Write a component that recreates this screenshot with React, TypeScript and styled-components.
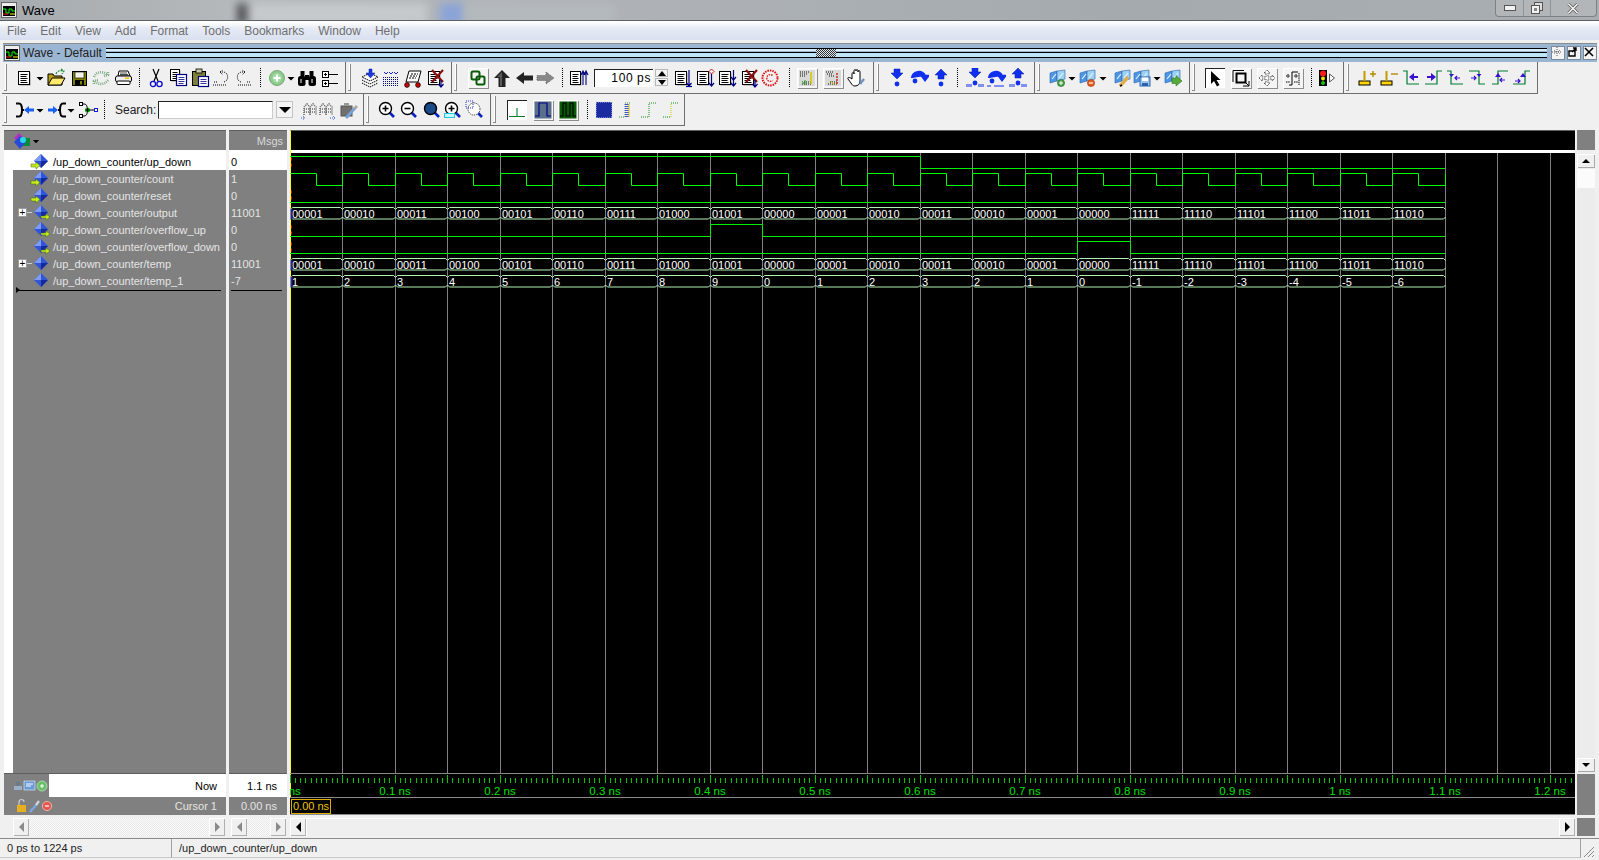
import React from "react";
import styled, { createGlobalStyle } from "styled-components";

const GlobalStyle = createGlobalStyle`
  html, body { margin: 0; padding: 0; background: #f0f0f0; overflow: hidden; }
  body { font-family: "Liberation Sans", Arial, sans-serif; font-size: 12px; color: #000; }
  #root { width: 1599px; height: 860px; }
`;

/* ---------- page frame ---------- */
const Page = styled.div`
  width: 1599px;
  height: 860px;
  display: flex;
  flex-direction: column;
  overflow: hidden;
  background: #f0f0f0;
`;
const TitleBar = styled.div`
  position: relative;
  height: 21px;
  flex: none;
  display: flex;
  align-items: center;
  overflow: hidden;
  background: linear-gradient(90deg, #a6abaf 0%, #b4b8bb 14%, #aeb2b6 40%, #a4aaae 70%, #a9aeb2 100%);
  border-bottom: 1px solid #5c6064;
  box-sizing: border-box;
`;
const Blur = styled.div<{ $l: number; $w: number; $c: string }>`
  position: absolute;
  top: 3px;
  left: ${(p) => p.$l}px;
  width: ${(p) => p.$w}px;
  height: 22px;
  background: ${(p) => p.$c};
  filter: blur(4px);
`;
const AppName = styled.span`
  position: relative;
  font-size: 13px;
  margin-left: 5px;
`;
const LogoBox = styled.span`
  position: relative;
  display: flex;
  margin-left: 1px;
`;
const WinControls = styled.div`
  position: absolute;
  right: 2px;
  top: 0;
  height: 17px;
  width: 102px;
  display: flex;
  border: 1px solid #7d8185;
  border-top: none;
  border-radius: 0 0 4px 4px;
  background: #b3b6b8;
  box-sizing: border-box;
`;
const WinBtn = styled.div<{ $w: number }>`
  width: ${(p) => p.$w}px;
  display: flex;
  align-items: center;
  justify-content: center;
  border-right: 1px solid #8f9397;
  &:last-child { border-right: none; }
`;
const MenuBar = styled.div`
  height: 19px;
  flex: none;
  display: flex;
  align-items: center;
  padding-left: 0;
  border-top: 1px solid #fff;
  background: linear-gradient(#ffffff 0%, #e6ebf5 35%, #d9e0f0 100%);
  box-sizing: border-box;
`;
const MenuItem = styled.span`
  color: #6f6f6f;
  padding: 0 7px;
  font-size: 12px;
`;
const SubTitle = styled.div`
  margin: 3px 2px 0 3px;
  height: 19px;
  flex: none;
  display: flex;
  align-items: center;
  background: #9ab6d2;
  border-top: 1px solid #8b8b8b;
  box-sizing: border-box;
`;
const SubText = styled.span`
  margin: 0 4px 0 3px;
  color: #222;
  white-space: nowrap;
`;
const GripLines = styled.div`
  flex: 1;
  height: 8px;
  display: flex;
  justify-content: center;
  align-items: center;
  border-top: 1px solid #000;
  border-bottom: 1px solid #000;
  background: linear-gradient(#d6ecfa 0 2px, #9ab6d2 2px 3px, #000 3px 4px, #bfe3f7 4px 6px);
`;
const GripDots = styled.span`
  width: 20px;
  height: 8px;
  background: repeating-conic-gradient(#333 0 25%, #dce6ef 0 50%) 0 0 / 2px 2px;
`;
const SubBtn = styled.span<{ $first?: boolean }>`
  width: 12px;
  height: 12px;
  margin-left: 2px;
  display: flex;
  background: #f4f4f4;
  border: 1px solid #7a8a9a;
  ${(p) => (p.$first ? "margin-left: 4px;" : "")}
`;

/* ---------- toolbars ---------- */
const ToolRow = styled.div<{ $h: number }>`
  height: ${(p) => p.$h}px;
  flex: none;
  display: flex;
  padding-left: 2px;
`;
const Group = styled.div<{ $w: number }>`
  width: ${(p) => p.$w}px;
  flex: none;
  box-sizing: border-box;
  display: flex;
  align-items: center;
  border-right: 1px solid #6e6e6e;
  border-bottom: 1px solid #6e6e6e;
`;
const Grip = styled.span`
  flex: none;
  width: 3px;
  height: 27px;
  margin: 0 1px 0 2px;
  box-sizing: border-box;
  border-right: 1px solid #8a8a8a;
  border-bottom: 1px solid #8a8a8a;
  box-shadow: inset -1px 0 0 #fff;
`;
const Strip = styled.div<{ $pad: number }>`
  display: flex;
  align-items: center;
  margin-left: ${(p) => p.$pad}px;
`;
const Tool = styled.div<{ $w: number }>`
  width: ${(p) => p.$w}px;
  flex: none;
  display: flex;
  justify-content: flex-start;
`;
const Face = styled.span<{ $kind?: string }>`
  display: flex;
  width: 20px;
  height: 20px;
  ${(p) =>
    p.$kind === "r"
      ? "box-shadow: inset 1px 1px 0 #fff, 1px 1px 0 #8c8c8c; background: #f4f4f4;"
      : ""}
  ${(p) =>
    p.$kind === "s"
      ? "box-shadow: inset 1px 1px 0 #222; background: #fff;"
      : ""}
`;
const SpinBox = styled.div`
  display: flex;
  align-items: center;
  margin-left: 25px;
  margin-right: 6px;
`;
const SpinInput = styled.div`
  width: 59px;
  height: 18px;
  box-sizing: border-box;
  background: #fff;
  border-top: 1px solid #222;
  border-left: 1px solid #222;
  font-size: 12px;
  line-height: 17px;
  text-align: right;
  padding-right: 2px;
  letter-spacing: 0.6px;
`;
const SpinButtons = styled.div`
  margin-left: 2px;
  width: 13px;
  display: flex;
  flex-direction: column;
  gap: 1px;
`;
const SpinBtn = styled.span<{ $down?: boolean }>`
  height: 8px;
  background: #f4f4f4;
  box-shadow: inset 0 0 0 1px #b8b8b8;
  display: flex;
  align-items: center;
  justify-content: center;
  &::after {
    content: "";
    border-left: 4px solid transparent;
    border-right: 4px solid transparent;
    ${(p) => (p.$down ? "border-top: 5px solid #000;" : "border-bottom: 5px solid #000;")}
  }
`;
const SearchBox = styled.div`
  display: flex;
  align-items: center;
  margin-right: 7px;
`;
const SearchLabel = styled.span`
  width: 43px;
  font-size: 12px;
  color: #222;
`;
const SearchInput = styled.div`
  width: 115px;
  height: 18px;
  box-sizing: border-box;
  background: #fff;
  border: 1px solid #222;
  border-right-color: #ccc;
  border-bottom-color: #ccc;
`;
const SearchDrop = styled.span`
  margin-left: 3px;
  width: 17px;
  height: 17px;
  background: #f4f4f4;
  box-shadow: inset 0 0 0 1px #c4c4c4;
  display: flex;
  align-items: center;
  justify-content: center;
  &::after {
    content: "";
    border-left: 6px solid transparent;
    border-right: 6px solid transparent;
    border-top: 6px solid #000;
  }
`;

/* ---------- wave panes ---------- */
const Panes = styled.div`
  margin-top: 4px;
  height: 706px;
  flex: none;
  display: flex;
  padding-left: 4px;
`;
const Col = styled.div<{ $w: number; $gap?: number }>`
  width: ${(p) => p.$w}px;
  margin-right: ${(p) => p.$gap ?? 3}px;
  flex: none;
  display: flex;
  flex-direction: column;
`;
const Head = styled.div<{ $dark?: boolean }>`
  height: 20px;
  flex: none;
  box-sizing: border-box;
  display: flex;
  align-items: center;
  border-top: 1px solid #5e5e5e;
  background: ${(p) => (p.$dark ? "#000" : "#808080")};
  ${(p) => (p.$dark ? "border-left: 1px solid #ff0;" : "")}
`;
const HeadIcon = styled.span`
  display: flex;
  margin-left: 9px;
`;
const HeadDrop = styled.span`
  display: flex;
  margin-left: -4px;
`;
const MsgsLabel = styled.span`
  margin-left: auto;
  margin-right: 4px;
  color: #d8d8d8;
  font-size: 11px;
`;
const HeadGap = styled.div<{ $mark?: boolean }>`
  height: 3px;
  flex: none;
  background: #fff;
  ${(p) => (p.$mark ? "border-left: 1px solid #ff0;" : "")}
`;
const RowList = styled.div<{ $strip?: boolean }>`
  height: 620px;
  flex: none;
  box-sizing: border-box;
  background: #808080;
  ${(p) => (p.$strip ? "border-left: 9px solid #fff;" : "")}
`;
const SignalRow = styled.div<{ $on?: boolean }>`
  height: 17px;
  display: flex;
  align-items: center;
  position: relative;
  font-size: 11px;
  background: ${(p) => (p.$on ? "#fff" : "transparent")};
  color: ${(p) => (p.$on ? "#000" : "#e4e4e4")};
  white-space: nowrap;
`;
const Expander = styled.span`
  width: 9px;
  height: 9px;
  margin-left: 5px;
  box-sizing: border-box;
  background: #fff;
  border: 1px solid #9a9a9a;
  color: #000;
  font-size: 10px;
  line-height: 7px;
  text-align: center;
  position: relative;
  &::after {
    content: "";
    position: absolute;
    left: 8px;
    top: 3px;
    width: 5px;
    border-top: 1px solid #d0d0d0;
  }
`;
const RowSpacer = styled.span<{ $w: number }>`
  width: ${(p) => p.$w}px;
  flex: none;
`;
const RowIcon = styled.span`
  display: flex;
  flex: none;
  margin-right: 3px;
`;
const ValueText = styled.span`
  margin-left: 2px;
`;
const InsertMark = styled.div<{ $l: number; $r: number; $tip?: boolean }>`
  margin: 0 ${(p) => p.$r}px 0 ${(p) => p.$l}px;
  border-top: 1px solid #000;
  position: relative;
  top: 1px;
  ${(p) =>
    p.$tip
      ? `&::before {
    content: "";
    position: absolute;
    left: -1px;
    top: -4px;
    border-top: 3px solid transparent;
    border-bottom: 3px solid transparent;
    border-left: 4px solid #000;
  }`
      : ""}
`;
const RuleLine = styled.div<{ $mark?: boolean }>`
  height: 1px;
  flex: none;
  background: #5e5e5e;
  ${(p) => (p.$mark ? "background: #8a8a8a;" : "")}
`;
const NowRow = styled.div<{ $dark?: boolean }>`
  height: 23px;
  flex: none;
  display: flex;
  align-items: center;
  justify-content: flex-end;
  background: ${(p) => (p.$dark ? "#000" : "#fff")};
  font-size: 11px;
`;
const IconTray = styled.div`
  width: 45px;
  height: 23px;
  margin-right: auto;
  background: #808080;
  display: flex;
  align-items: center;
  padding-left: 9px;
  box-sizing: border-box;
`;
const CursorRow = styled.div<{ $dark?: boolean }>`
  height: 18px;
  flex: none;
  box-sizing: border-box;
  display: flex;
  align-items: center;
  justify-content: flex-end;
  background: ${(p) => (p.$dark ? "#000" : "#808080")};
  color: #e4e4e4;
  font-size: 11px;
  ${(p) => (p.$dark ? "justify-content: flex-start; border-top: 1px solid #8a8a8a; border-bottom: 1px solid #8a8a8a;" : "")}
`;
const CursorTray = styled.div`
  margin-right: auto;
  display: flex;
  align-items: center;
  padding-left: 12px;
`;
const RightPad = styled.span<{ $r: number }>`
  margin-right: ${(p) => p.$r}px;
`;
const CursorFlag = styled.span`
  margin-left: 1px;
  width: 40px;
  height: 15px;
  box-sizing: border-box;
  border: 1px solid #e0ac00;
  color: #f0c400;
  font-size: 11px;
  line-height: 13px;
  padding-left: 1px;
  white-space: nowrap;
`;
const ScrollBar = styled.div<{ $l?: number; $r?: number }>`
  height: 18px;
  margin: 3px ${(p) => p.$r ?? 0}px 0 ${(p) => p.$l ?? 0}px;
  flex: none;
  display: flex;
  justify-content: space-between;
  background: repeating-conic-gradient(#e8e8e8 0 25%, #fbfbfb 0 50%) 0 0 / 2px 2px;
`;
const ScrollBtn = styled.span<{ $dir: string; $on?: boolean }>`
  width: 16px;
  height: 18px;
  background: #f0f0f0;
  box-shadow: inset 1px 1px 0 #fff, inset -1px -1px 0 #b0b0b0;
  display: flex;
  align-items: center;
  justify-content: center;
  &::after {
    content: "";
    border-top: 5px solid transparent;
    border-bottom: 5px solid transparent;
    ${(p) =>
      p.$dir === "l"
        ? `border-right: 5px solid ${p.$on ? "#000" : "#8a8a8a"};`
        : `border-left: 5px solid ${p.$on ? "#000" : "#8a8a8a"};`}
  }
`;
const ScrollFill = styled.span`
  flex: 1;
  background: #efefef;
  box-shadow: inset 1px 1px 0 #fff;
`;
const SideCol = styled.div`
  width: 18px;
  flex: none;
  display: flex;
  flex-direction: column;
`;
const SideBlock = styled.div<{ $h: number; $mt?: number }>`
  height: ${(p) => p.$h}px;
  margin-top: ${(p) => p.$mt ?? 0}px;
  flex: none;
  background: #808080;
`;
const VScroll = styled.div`
  height: 620px;
  margin-top: 3px;
  flex: none;
  display: flex;
  flex-direction: column;
  background: #ececec;
`;
const VBtn = styled.span<{ $down?: boolean }>`
  height: 14px;
  margin: 1px 0;
  flex: none;
  background: #f0f0f0;
  box-shadow: inset 1px 1px 0 #fff, inset -1px -1px 0 #a8a8a8;
  display: flex;
  align-items: center;
  justify-content: center;
  &::after {
    content: "";
    border-left: 4px solid transparent;
    border-right: 4px solid transparent;
    ${(p) => (p.$down ? "border-top: 4px solid #000;" : "border-bottom: 4px solid #000;")}
  }
`;
const VThumb = styled.span`
  height: 19px;
  flex: none;
  background: #fbfbfb;
`;
const VFill = styled.span`
  flex: 1;
`;

/* ---------- status bar ---------- */
const StatusBar = styled.div`
  margin-top: 2px;
  height: 20px;
  flex: none;
  display: flex;
  border-top: 1px solid #8a8a8a;
  box-sizing: border-box;
  font-size: 11px;
  color: #222;
`;
const StatusCell = styled.div<{ $w?: number }>`
  ${(p) => (p.$w ? `width: ${p.$w}px; flex: none;` : "flex: 1;")}
  box-sizing: border-box;
  display: flex;
  align-items: center;
  padding-left: 7px;
  border-right: 1px solid #a0a0a0;
  border-bottom: 1px solid #c8c8c8;
`;
const ResizeCorner = styled.span`
  width: 18px;
  flex: none;
  display: flex;
  align-items: flex-end;
`;

const WaveSvg = styled.svg`
  display: block;
  font-family: "Liberation Sans", Arial, sans-serif;
`;

/* ---------- icons: everything drawn on a 20x20 grid ---------- */
const page = (x = 3, y = 2, w = 10, h = 14) => (
  <>
    <rect x={x + 1.5} y={y + 1.5} width={w} height={h} fill="#999" />
    <rect x={x + 0.5} y={y + 0.5} width={w} height={h} fill="#fff" stroke="#000" />
    <path d={`M${x + 2.5} ${y + 3.5}h${w - 4}M${x + 2.5} ${y + 5.5}h${w - 5}M${x + 2.5} ${y + 7.5}h${w - 4}M${x + 2.5} ${y + 9.5}h${w - 5}M${x + 2.5} ${y + 11.5}h${w - 4}`} stroke="#000" />
  </>
);
const navyDown = (x: number, y1 = 3, y2 = 16) => (
  <path d={`M${x} ${y1}V${y2}M${x - 2.5} ${y2 - 3}L${x} ${y2}L${x + 2.5} ${y2 - 3}`} fill="none" stroke="#000080" strokeWidth="1.2" />
);
const blueDown = (y = 2) => <polygon points={`7,${y} 13,${y} 13,${y + 4} 16,${y + 4} 10,${y + 10} 4,${y + 4} 7,${y + 4}`} fill="#1030f0" stroke="#0a1aa0" strokeWidth=".5" />;
const blueUp = (y = 2) => <polygon points={`10,${y} 16,${y + 6} 13,${y + 6} 13,${y + 10} 7,${y + 10} 7,${y + 6} 4,${y + 6}`} fill="#1030f0" stroke="#0a1aa0" strokeWidth=".5" />;
const overArc = <path d="M3 10C4 3 13 2 16 8M13 8h6l-3 4z" fill="#1030f0" stroke="#1030f0" strokeWidth="2.4" />;
const dotRow = <path d="M2 16v3M4 16v3M6 16v3M14 16v3M16 16v3M18 16v3" stroke="#1030f0" />;
const sheets = (
  <>
    <polygon points="2,5 9,3 9,13 2,15" fill="#4d96e6" stroke="#2a62ad" strokeWidth=".6" />
    <polygon points="9,3 17,2 17,11 9,13" fill="#9cd0f5" stroke="#2a62ad" strokeWidth=".6" />
    <path d="M4 11L8 6M11 10l4-5" stroke="#e4f4ff" strokeWidth="1.2" />
  </>
);
const yellowBase = (
  <>
    <rect x="2" y="13" width="11" height="4" fill="#ffd400" stroke="#000" />
    <rect x="2" y="17" width="11" height="1" fill="#777" />
    <path d="M7.5 3v10" stroke="#c49a00" strokeWidth="2" />
  </>
);
const edge = (d: string) => <path d={d} fill="none" stroke="#007a33" strokeWidth="1.2" />;
const purpleL = (x: number, y = 9) => <polygon points={`${x},${y} ${x + 5},${y - 4} ${x + 5},${y - 1} ${x + 9},${y - 1} ${x + 9},${y + 1} ${x + 5},${y + 1} ${x + 5},${y + 4}`} fill="#3a10d0" />;
const purpleR = (x: number, y = 9) => <polygon points={`${x + 9},${y} ${x + 4},${y - 4} ${x + 4},${y - 1} ${x},${y - 1} ${x},${y + 1} ${x + 4},${y + 1} ${x + 4},${y + 4}`} fill="#3a10d0" />;
const smallL = (x: number, y: number) => <path d={`M${x} ${y}h5M${x + 2} ${y - 2}l-2 2l2 2`} stroke="#3a10d0" fill="none" strokeWidth="1.2" />;
const smallR = (x: number, y: number) => <path d={`M${x} ${y}h5M${x + 3} ${y - 2}l2 2l-2 2`} stroke="#3a10d0" fill="none" strokeWidth="1.2" />;
const lens = (fill: string, sign = "") => (
  <>
    <path d="M12 12l5 5" stroke="#0a22c0" strokeWidth="2.6" />
    <circle cx="8.5" cy="8.5" r="6" fill={fill} stroke="#000" strokeWidth="1.4" />
    {sign && <path d={sign} stroke="#000" strokeWidth="1.6" />}
  </>
);
const bracket = (flip: boolean) => (
  <g transform={flip ? "matrix(-1 0 0 1 20 0)" : undefined}>
    <path d="M1 3.5h3c3 0 3 3.5 3 6.5s0 6.5-3 6.5H1M7 10h2" fill="none" stroke="#000" strokeWidth="2" />
    <polygon points="9,10 14,6 14,8.5 19,8.5 19,11.5 14,11.5 14,14" fill="#1a60f0" />
  </g>
);
const waveThumb = (stroke: string, fill: string) => (
  <>
    <rect x="1.5" y="1.5" width="17" height="17" fill={fill} />
    <path d="M2 16h4V3h8v13h4" fill="none" stroke={stroke} strokeWidth="1.2" />
  </>
);
const dither = "1 1";

const icons: Record<string, React.ReactNode> = {
  doc: page(4, 3, 11, 13),
  dd: <polygon points="6.5,9 13.5,9 10,12.5" fill="#000" />,
  sep: <path d="M10.5 0V20" stroke="#000" strokeDasharray={dither} />,
  open: (
    <>
      <path d="M2 17V6h5l1 2h8v9z" fill="#b79e12" stroke="#000" />
      <polygon points="2,17 6,10 19,10 15,17" fill="#ffe96a" stroke="#000" />
      <path d="M10 6C11 3 14 2 17 3M15 1l3 2-2 3" fill="none" stroke="#1a8a3a" strokeWidth="1.2" strokeDasharray="2 1" />
    </>
  ),
  save: (
    <>
      <rect x="3.5" y="3.5" width="14" height="14" fill="#808000" stroke="#000" />
      <rect x="6" y="4" width="9" height="6" fill="#f4f4e8" stroke="#000" strokeWidth=".6" />
      <rect x="6" y="12" width="9" height="5.5" fill="#000" />
      <rect x="11" y="13" width="2" height="3.5" fill="#808000" />
    </>
  ),
  reload: (
    <path d="M3 9C5 3 13 3 16 7M13 8l4-1 0-4M17 12C14 17 7 17 4 13M7 12l-4 1 0 4" fill="none" stroke="#86b08a" strokeWidth="2.6" strokeDasharray={dither} />
  ),
  print: (
    <>
      <polygon points="6,3 15,3 17,8 5,8" fill="#fff" stroke="#000" />
      <path d="M7 5h7M7 6.5h8" stroke="#000" strokeWidth=".7" />
      <rect x="2.5" y="8" width="16" height="6" rx="2" fill="#eee" stroke="#000" />
      <rect x="12" y="9.5" width="4" height="1.5" fill="#e6c800" />
      <rect x="4" y="13" width="13" height="3.5" rx="1" fill="#fff" stroke="#000" />
    </>
  ),
  cut: (
    <>
      <path d="M7 1l5 12M13 1L8 13" stroke="#000" strokeWidth="1.2" />
      <circle cx="7" cy="16" r="2.6" fill="none" stroke="#0a0ad0" strokeWidth="1.3" />
      <circle cx="13.5" cy="16" r="2.6" fill="none" stroke="#0a0ad0" strokeWidth="1.3" />
    </>
  ),
  copy: (
    <>
      {page(2, 1, 9, 11)}
      <rect x="8.5" y="6.5" width="10" height="11" fill="#fff" stroke="#000080" strokeWidth="1.2" />
      <path d="M10.5 9.5h6M10.5 11.5h6M10.5 13.5h6M10.5 15.5h5" stroke="#000080" strokeWidth=".8" />
    </>
  ),
  paste: (
    <>
      <rect x="2.5" y="3.5" width="13" height="14" fill="#7f7f3a" stroke="#000" />
      <rect x="6" y="1" width="6" height="4" fill="#c9c9a0" stroke="#000" strokeWidth=".8" />
      <rect x="8.5" y="8.5" width="10" height="10" fill="#fff" stroke="#000080" strokeWidth="1.2" />
      <path d="M10.5 11.5h6M10.5 13.5h6M10.5 15.5h6" stroke="#000080" strokeWidth=".8" />
    </>
  ),
  undo: (
    <path d="M8 4h3c6 0 6 9 1 10M8 4l3-2M8 4l3 3M2 14h4M1 17h14" fill="none" stroke="#000" strokeDasharray={dither} />
  ),
  redo: (
    <path d="M12 4H9C3 4 3 13 8 14M12 4L9 2M12 4L9 7M14 14h4M5 17h14" fill="none" stroke="#000" strokeDasharray={dither} />
  ),
  add: (
    <>
      <circle cx="10" cy="10" r="7.5" fill="#8fca8f" stroke="#78a878" />
      <circle cx="10" cy="10" r="4.5" fill="#a6dca6" />
      <path d="M10 6.5v7M6.5 10h7" stroke="#fff" strokeWidth="2" />
    </>
  ),
  binos: (
    <>
      <rect x="1" y="8" width="7.5" height="10" rx="2.5" fill="#000" />
      <rect x="11.5" y="8" width="7.5" height="10" rx="2.5" fill="#000" />
      <rect x="3.5" y="3" width="4" height="7" fill="#000" />
      <rect x="12.5" y="3" width="4" height="7" fill="#000" />
      <rect x="8" y="7" width="4" height="5" fill="#000" />
      <path d="M4 11v4M15 11v4" stroke="#fff" />
    </>
  ),
  tree: (
    <>
      <path d="M9 6.5h10M9 15.5h10" stroke="#000" />
      <rect x="3.5" y="3.5" width="6" height="6" fill="#fff" stroke="#000" />
      <rect x="3.5" y="12.5" width="6" height="6" fill="#fff" stroke="#000" />
      <path d="M5 6.5h3M6.5 5v3M5 15.5h3M6.5 14v3" stroke="#000" />
    </>
  ),
  stack: (
    <>
      <path d="M2 9l8-4 8 4-8 4zM2 12l8 4 8-4M2 15l8 4 8-4" fill="#fff" stroke="#000" strokeDasharray="1.5 .7" />
      <polygon points="9,1 12,1 12,5 15,5 10.5,10 6,5 9,5" fill="#1a3ae0" stroke="#0a1aa0" strokeWidth=".5" />
    </>
  ),
  dots: (
    <>
      <path d="M2 9.5h16M2 11.5h16M2 13.5h16M2 15.5h16M2 17.5h16" stroke="#00007a" strokeDasharray={dither} />
      <path d="M3 4l2 2 2-2M8 4l2 2 2-2M13 4l2 2 2-2" fill="none" stroke="#1a1ad0" />
    </>
  ),
  wheel: (
    <>
      <polygon points="6,3 18,3 15,14 3,14" fill="#fff" stroke="#000" />
      <path d="M8 6h7M7 8h7M6 10h7" stroke="#000" strokeDasharray="2 1" />
      <circle cx="4" cy="17" r="2.4" fill="#c00" stroke="#000" strokeWidth=".7" />
      <circle cx="15" cy="17" r="2.4" fill="#c00" stroke="#000" strokeWidth=".7" />
    </>
  ),
  docX: (
    <>
      {page(2, 3, 11, 13)}
      <path d="M6 2l11 12M17 2L6 14" stroke="#8a1010" strokeWidth="2.2" />
      {navyDown(15, 12, 19)}
    </>
  ),
  link: (
    <>
      <rect x="3.5" y="3.5" width="8" height="8" rx="1.5" fill="none" stroke="#0a5a0a" strokeWidth="2" />
      <rect x="8.5" y="8.5" width="8" height="8" rx="1.5" fill="none" stroke="#0a5a0a" strokeWidth="2" />
    </>
  ),
  up: (
    <>
      <polygon points="10,2 18,10 13.5,10 13.5,19 6.5,19 6.5,10 2,10" fill="#222" />
      <polygon points="10,4 5,9 8,9 8,18 10,18" fill="#5a5a5a" />
    </>
  ),
  left: <polygon points="2,10 10,4 10,7.5 19,7.5 19,12.5 10,12.5 10,16" fill="#222" />,
  right: <polygon points="18,10 10,4 10,7.5 1,7.5 1,12.5 10,12.5 10,16" fill="#888" stroke="#666" strokeDasharray={dither} />,
  fitUp: (
    <>
      {page(1, 3, 10, 13)}
      <path d="M14 3v14M17 3v14M12 7l2-4 2 4M15 7l2-4 2 4" fill="none" stroke="#000080" strokeWidth="1.1" />
    </>
  ),
  nextEdge: (
    <>
      {page(1, 3, 11, 13)}
      {navyDown(15, 2, 18)}
      <path d="M12 18.5h6" stroke="#000080" strokeWidth="1.2" />
    </>
  ),
  nextDiamond: (
    <>
      {page(1, 3, 11, 13)}
      <polygon points="15.5,1 18,3.5 15.5,6 13,3.5" fill="#fff" stroke="#d01010" />
      {navyDown(15.5, 6, 18)}
    </>
  ),
  nextDouble: (
    <>
      {page(1, 3, 11, 13)}
      {navyDown(15.5, 2, 12)}
      {navyDown(15.5, 10, 18)}
    </>
  ),
  redC: (
    <>
      <circle cx="10" cy="10" r="7.5" fill="none" stroke="#e01010" strokeWidth="2" strokeDasharray="1.5 1" />
      <path d="M12.5 7.5a3.4 3.4 0 1 0 0 5" fill="none" stroke="#e01010" strokeWidth="1.4" strokeDasharray="1.5 1" />
    </>
  ),
  chartA: (
    <>
      <rect x="2" y="2" width="16" height="16" fill="#d8d8d8" />
      <path d="M3 4h9M3 6h7M3 8h5M5 16h10M7 14h8" stroke="#111" strokeDasharray={dither} />
      <path d="M14 4v12" stroke="#d8c800" strokeWidth="1.6" />
      <path d="M5 13l3 4M8 12v5" stroke="#2aa02a" />
    </>
  ),
  chartB: (
    <>
      <rect x="2" y="2" width="16" height="16" fill="#d8d8d8" />
      <path d="M3 4h8M4 6h6M6 8h6M5 16h10M7 14h8" stroke="#111" strokeDasharray={dither} />
      <path d="M14 5v11" stroke="#d03030" strokeWidth="1.6" strokeDasharray="2 1" />
      <path d="M8 13l3 4" stroke="#c8c800" />
    </>
  ),
  hand: (
    <>
      <path d="M5 11V6c0-2 2-2 2 0V3c0-2 2-2 2 0v0c0-2 2-2 2 0v1c0-2 2-2 2 0v9c0 3-2 5-5 5-2 0-3-1-4-3l-3-4c-1-2 2-2 4 0z" fill="#fff" stroke="#000" />
      <path d="M13 16l4-5" stroke="#6c90c8" strokeWidth="2.4" />
    </>
  ),
  stepIn: (
    <>
      {blueDown(1)}
      <circle cx="10" cy="16" r="2.4" fill="#1030f0" />
    </>
  ),
  stepOver: (
    <>
      {overArc}
      <circle cx="6" cy="13" r="2.4" fill="#1030f0" />
    </>
  ),
  stepOut: (
    <>
      {blueUp(1)}
      <circle cx="10" cy="16" r="2.4" fill="#1030f0" />
    </>
  ),
  allIn: (
    <>
      {blueDown(0)}
      <circle cx="10" cy="15" r="2.4" fill="#1030f0" />
      {dotRow}
    </>
  ),
  allOver: (
    <>
      {overArc}
      <circle cx="6" cy="13" r="2.4" fill="#1030f0" />
      <path d="M2 17v2M4 17v2M9 17v2M11 17v2M13 17v2M15 17v2M17 17v2" stroke="#1030f0" />
    </>
  ),
  allOut: (
    <>
      {blueUp(0)}
      <circle cx="10" cy="15" r="2.4" fill="#1030f0" />
      {dotRow}
    </>
  ),
  sheetAdd: (
    <>
      {sheets}
      <path d="M13 12v4" stroke="#8a6a20" />
      <circle cx="13" cy="15" r="3.6" fill="#4aa04a" stroke="#2a702a" strokeWidth=".6" />
      <path d="M11 15h4M13 13v4" stroke="#fff" />
    </>
  ),
  sheetDel: (
    <>
      {sheets}
      <circle cx="13" cy="15" r="3.6" fill="#e25a1c" stroke="#a03a10" strokeWidth=".6" />
      <path d="M11 15h4" stroke="#fff" strokeWidth="1.2" />
    </>
  ),
  sheetEdit: (
    <>
      {sheets}
      <path d="M7 18l8-9" stroke="#e0b050" strokeWidth="3.4" />
      <path d="M7 18l2-1" stroke="#000" strokeWidth="1.4" />
    </>
  ),
  sheetSave: (
    <>
      {sheets}
      <rect x="8" y="9" width="10" height="9" fill="#9ac6ef" stroke="#2a62ad" />
      <rect x="10" y="9.5" width="6" height="3.5" fill="#fff" />
      <rect x="10" y="15" width="6" height="3" fill="#2a62ad" />
    </>
  ),
  sheetGo: (
    <>
      {sheets}
      <polygon points="9,10 13,10 13,7.5 19,13 13,18 13,15.5 9,15.5" fill="#5aa83a" stroke="#2a7a2a" strokeWidth=".6" />
    </>
  ),
  select: <polygon points="6,3 6,16 9,13 12,18.5 14.5,17 11.5,12 15.5,12" fill="#000" />,
  zoomBox: (
    <>
      <path d="M2 14V2.5h11" fill="none" stroke="#000" />
      <rect x="5.5" y="5.5" width="9" height="9" fill="none" stroke="#000" strokeWidth="2" />
      <path d="M12 18h6v-5M15 15l3 3" fill="none" stroke="#000" />
    </>
  ),
  pan: (
    <path d="M10 2l3 3h-2v4h4V7l3 3-3 3v-2h-4v4h2l-3 3-3-3h2v-4H5v2l-3-3 3-3v2h4V5H7z" fill="#fff" stroke="#222" strokeDasharray={dither} />
  ),
  waveCursors: (
    <>
      <path d="M9 4v13h-3M9 4h6" fill="none" stroke="#000" />
      <path d="M3 8h4M5 6v4M3 14h4M11 8h4M13 6v4M11 14h4M16 5v12" stroke="#000" strokeDasharray="1.5 .7" />
    </>
  ),
  traffic: (
    <>
      <rect x="3" y="2" width="8" height="16" fill="#000" />
      <circle cx="7" cy="5.5" r="3" fill="#ff1a1a" />
      <circle cx="7" cy="10.5" r="2" fill="#e6e600" />
      <circle cx="7" cy="15" r="2" fill="#16c016" />
      <path d="M13.5 6v8l5-4z" fill="#fff" stroke="#555" />
    </>
  ),
  curAdd: (
    <>
      {yellowBase}
      <path d="M13 6h6M16 3v6" stroke="#b58a00" strokeWidth="1.4" />
    </>
  ),
  curDel: (
    <>
      {yellowBase}
      <path d="M12 6h7" stroke="#b58a00" strokeWidth="1.4" />
    </>
  ),
  edgeL: (
    <>
      {edge("M1 3h4v13h12")}
      {purpleL(7, 9)}
    </>
  ),
  edgeR: (
    <>
      {edge("M1 16h12V3h5")}
      {purpleR(3, 9)}
    </>
  ),
  e1: (
    <>
      {edge("M1 3h4v13h12")}
      <path d="M3 6h5L5.5 9z" fill="#3a10d0" />
      {smallL(9, 10)}
    </>
  ),
  e2: (
    <>
      {edge("M1 3h10v13h6")}
      <path d="M8.5 6h5L11 9z" fill="#3a10d0" />
      {smallR(3, 10)}
    </>
  ),
  e3: (
    <>
      {edge("M1 16h6V3h10")}
      <path d="M7 5l3 4H4z" fill="#3a10d0" />
      {smallL(9, 12)}
    </>
  ),
  e4: (
    <>
      {edge("M1 16h12V3h5")}
      <path d="M11 5l3 4H8z" fill="#3a10d0" />
      {smallR(3, 13)}
    </>
  ),
  mergeIn: bracket(false),
  mergeOut: bracket(true),
  netAdd: (
    <>
      <path d="M3 4h3c3 0 3 3 4 6-1 3-1 6-4 6H3M10 10h7" fill="none" stroke="#000" />
      <rect x="1.5" y="2.5" width="3" height="3" fill="#fff" stroke="#000" />
      <rect x="1.5" y="14.5" width="3" height="3" fill="#fff" stroke="#000" />
      <circle cx="9.5" cy="10" r="2.5" fill="#0a0" />
      <path d="M7.5 10h4M9.5 8v4" stroke="#000" />
      <rect x="16.5" y="8.5" width="3" height="3" fill="#fff" stroke="#1a1ae0" />
    </>
  ),
  findDown: (
    <>
      <path d="M4 15V7l3-3 3 3v8M10 15V7l3-3 3 3v8M4 9h12M4 12h12" fill="none" stroke="#6a6a6a" strokeWidth="1.6" strokeDasharray={dither} />
      <path d="M1 18h4M3 16l2 2-2 2" fill="none" stroke="#3a5ad0" strokeDasharray={dither} />
    </>
  ),
  findUp: (
    <>
      <path d="M4 15V7l3-3 3 3v8M10 15V7l3-3 3 3v8M4 9h12M4 12h12" fill="none" stroke="#6a6a6a" strokeWidth="1.6" strokeDasharray={dither} />
      <path d="M14 18h5M17 16l2 2-2 2" fill="none" stroke="#3a5ad0" strokeDasharray={dither} />
    </>
  ),
  tools: (
    <>
      <rect x="2" y="6" width="11" height="10" fill="#707070" stroke="#555" />
      <rect x="5" y="3" width="5" height="3" fill="#999" />
      <path d="M7 18l9-10" stroke="#7aa0d8" strokeWidth="3" />
      <path d="M15 9l3-3" stroke="#a8a8a8" strokeWidth="3" />
    </>
  ),
  zoomIn: lens("#fff", "M5.5 8.5h6M8.5 5.5v6"),
  zoomOut: lens("#fff", "M5.5 8.5h6"),
  zoomFull: lens("#1a4a8a"),
  zoomCursor: (
    <>
      {lens("#fff", "M5.5 8.5h6M8.5 5.5v6")}
      <rect x="1.5" y="13.5" width="10" height="4" fill="#bff" stroke="#30c0d8" />
    </>
  ),
  zoomArea: (
    <>
      <path d="M12 12l5 5" stroke="#0a22c0" strokeWidth="2.6" />
      <circle cx="9" cy="9" r="6" fill="#fff" stroke="#222" strokeDasharray={dither} />
      <path d="M1 1h7v7H1z" fill="none" stroke="#1a3ad0" strokeDasharray={dither} />
    </>
  ),
  wLine: <path d="M2 16.5h16M10 8v8" stroke="#00802a" strokeWidth="1.1" fill="none" />,
  wBlue: waveThumb("#00008a", "#5a7088"),
  wGreen: (
    <>
      <rect x="1.5" y="1.5" width="17" height="17" fill="#0a5a0a" />
      <path d="M2 16h3V3h3v13h4V3h3v13h3" fill="none" stroke="#000" strokeWidth="1.1" />
    </>
  ),
  ditherBox: <rect x="2" y="2" width="16" height="16" fill="#1a2aa0" stroke="#d0d0f0" strokeDasharray={dither} />,
  s1: (
    <>
      <path d="M2 17h6V3h6" fill="none" stroke="#3a8a3a" strokeDasharray={dither} />
      <path d="M9 4v13M11 4v13" stroke="#1a2ad0" strokeDasharray={dither} strokeWidth="1.6" />
      <path d="M12 4v13" stroke="#d8c800" />
    </>
  ),
  s2: <path d="M3 17h8V3h7" fill="none" stroke="#1a8a1a" strokeDasharray={dither} />,
  s3: (
    <>
      <path d="M3 17h8" stroke="#1a8a1a" strokeDasharray={dither} />
      <path d="M11 17V3" stroke="#c8c800" strokeDasharray={dither} />
      <path d="M11 3h7" stroke="#1a8a1a" strokeDasharray={dither} />
    </>
  ),
};

const Ic = ({ name, size = 20 }: { name: string; size?: number }) => (
  <svg width={size} height={size} viewBox="0 0 20 20">
    {icons[name]}
  </svg>
);

const Logo = () => (
  <svg width="16" height="16" viewBox="0 0 16 16">
    <rect x=".5" y=".5" width="15" height="15" fill="#eee" stroke="#666" />
    <rect x="2" y="4" width="12" height="10" fill="#000" />
    <path d="M2 7h3v4h3V7h3v2h3" fill="none" stroke="#0f0" />
    <path d="M2 12h5" stroke="#f22" />
    <path d="M9 12h5" stroke="#ff0" />
  </svg>
);

const Diamond = ({ arrow }: { arrow?: "in" | "out" }) => (
  <svg width="20" height="17" viewBox="0 0 20 17">
    <polygon points="11,1 18,8 11,15 4,8" fill="#2f55d8" />
    <polygon points="11,1 4,8 11,8" fill="#7f9cf2" />
    <polygon points="11,8 18,8 11,15" fill="#16299c" />
    {arrow === "in" && <polygon points="1,11 6,11 6,9 10,12.5 6,16 6,14 1,14" fill="#c6ec1e" stroke="#3d6a00" strokeWidth=".5" />}
    {arrow === "out" && <polygon points="11,12 16,12 16,10 20,13 16,16 16,14 11,14" fill="#c6ec1e" stroke="#3d6a00" strokeWidth=".5" />}
  </svg>
);

const HeadGlyph = () => (
  <svg width="18" height="18" viewBox="0 0 18 18">
    <rect x="10" y="6" width="7" height="8" fill="#0a8a3a" />
    <polygon points="6,1 11,6 6,11 1,6" fill="#b030c0" />
    <polygon points="7,4 13,10 7,17 1,10" fill="#2848d8" />
    <circle cx="10" cy="8" r="3" fill="#28d8e8" />
  </svg>
);

const TinyTools = ({ kind }: { kind: "now" | "cursor" }) =>
  kind === "now" ? (
    <svg width="36" height="16" viewBox="0 0 36 16">
      <rect x="1" y="8" width="8" height="4" fill="#9ab0c8" />
      <rect x="3" y="4" width="4" height="4" fill="#6a7a8a" />
      <rect x="11" y="3" width="11" height="9" fill="#6a9ad8" stroke="#e8f0f8" strokeWidth=".6" />
      <path d="M13 6h7M13 8h5" stroke="#fff" />
      <circle cx="29" cy="8" r="5" fill="#6ac06a" stroke="#a8d8a8" />
      <path d="M27 8h4M29 6v4" stroke="#fff" />
    </svg>
  ) : (
    <svg width="38" height="16" viewBox="0 0 38 16">
      <rect x="1" y="7" width="9" height="7" fill="#e8b020" />
      <path d="M3 7V4a2.5 2.5 0 0 1 5 0" fill="none" stroke="#ccc" strokeWidth="1.2" />
      <path d="M14 14l7-8" stroke="#7aa8e0" strokeWidth="2.4" />
      <path d="M20 7l3-4" stroke="#d0d8e0" strokeWidth="2.2" />
      <circle cx="31" cy="8" r="4.6" fill="#e05a50" stroke="#f0b0a8" />
      <path d="M29 8h4" stroke="#fff" strokeWidth="1.2" />
    </svg>
  );

/* ---------- toolbar data: [icon, slot width, face] ---------- */
type Item = [string, number, string?];
type GroupDef = { w: number; pad: number; items: Item[]; spin?: Item[]; search?: Item[] };

const row1: GroupDef[] = [
  {
    w: 344,
    pad: 6,
    items: [["doc", 16], ["dd", 16], ["open", 23], ["save", 22], ["reload", 22], ["print", 16], ["sep", 17], ["cut", 22], ["copy", 22], ["paste", 22], ["undo", 21], ["redo", 17], ["sep", 17], ["add", 14], ["dd", 16], ["binos", 22], ["tree", 20]],
  },
  { w: 106, pad: 8, items: [["stack", 21], ["dots", 22], ["wheel", 23], ["docX", 20]] },
  {
    w: 422,
    pad: 10,
    items: [["link", 24, "r"], ["up", 22], ["left", 22], ["right", 16], ["sep", 17], ["fitUp", 0]],
    spin: [["nextEdge", 22], ["nextDiamond", 22], ["nextDouble", 22], ["docX", 20], ["redC", 19], ["sep", 18], ["chartA", 26, "r"], ["chartB", 24, "r"], ["hand", 20]],
  },
  { w: 161, pad: 7, items: [["stepIn", 22], ["stepOver", 22], ["stepOut", 16], ["sep", 18], ["allIn", 21], ["allOver", 22], ["allOut", 20]] },
  { w: 155, pad: 7, items: [["sheetAdd", 14], ["dd", 16], ["sheetDel", 15], ["dd", 20], ["sheetEdit", 19], ["sheetSave", 15], ["dd", 16], ["sheetGo", 20]] },
  { w: 154, pad: 9, items: [["select", 26, "s"], ["zoomBox", 26, "r"], ["pan", 26, "r"], ["waveCursors", 18, "r"], ["sep", 15], ["traffic", 20]] },
  { w: 194, pad: 7, items: [["curAdd", 22], ["curDel", 23], ["edgeL", 22], ["edgeR", 22], ["e1", 22], ["e2", 23], ["e3", 21], ["e4", 20]] },
];

const row2: GroupDef[] = [
  {
    w: 362,
    pad: 7,
    items: [["mergeIn", 15], ["dd", 17], ["mergeOut", 14], ["dd", 17], ["netAdd", 16], ["sep", 21]],
    search: [["findDown", 16], ["findUp", 23], ["tools", 20]],
  },
  { w: 127, pad: 7, items: [["zoomIn", 22], ["zoomOut", 23], ["zoomFull", 21], ["zoomCursor", 22], ["zoomArea", 20]] },
  { w: 194, pad: 10, items: [["wLine", 26, "s"], ["wBlue", 25, "r"], ["wGreen", 19, "r"], ["sep", 17], ["ditherBox", 23], ["s1", 21], ["s2", 22], ["s3", 20]] },
];

const renderItems = (items: Item[]) =>
  items.map(([name, w, kind], i) => (
    <Tool key={name + i} $w={w}>
      <Face $kind={kind}>
        <Ic name={name} />
      </Face>
    </Tool>
  ));

const ToolGroup = ({ def }: { def: GroupDef }) => (
  <Group $w={def.w}>
    <Grip />
    <Strip $pad={def.pad}>
      {renderItems(def.items)}
      {def.spin && (
        <>
          <SpinBox>
            <SpinInput>100 ps</SpinInput>
            <SpinButtons>
              <SpinBtn />
              <SpinBtn $down />
            </SpinButtons>
          </SpinBox>
          {renderItems(def.spin)}
        </>
      )}
      {def.search && (
        <>
          <SearchBox>
            <SearchLabel>Search:</SearchLabel>
            <SearchInput />
            <SearchDrop />
          </SearchBox>
          {renderItems(def.search)}
        </>
      )}
    </Strip>
  </Group>
);

/* ---------- signals ---------- */
const signals = [
  { name: "/up_down_counter/up_down", msg: "0", arrow: "in" as const },
  { name: "/up_down_counter/count", msg: "1", arrow: "in" as const },
  { name: "/up_down_counter/reset", msg: "0", arrow: "in" as const },
  { name: "/up_down_counter/output", msg: "11001", arrow: "out" as const, expand: true },
  { name: "/up_down_counter/overflow_up", msg: "0", arrow: "out" as const },
  { name: "/up_down_counter/overflow_down", msg: "0", arrow: "out" as const },
  { name: "/up_down_counter/temp", msg: "11001", expand: true },
  { name: "/up_down_counter/temp_1", msg: "-7" },
];

const P = 52.5;
const bits = ["00001", "00010", "00011", "00100", "00101", "00110", "00111", "01000", "01001", "00000", "00001", "00010", "00011", "00010", "00001", "00000", "11111", "11110", "11101", "11100", "11011", "11010"];
const ints = ["1", "2", "3", "4", "5", "6", "7", "8", "9", "0", "1", "2", "3", "2", "1", "0", "-1", "-2", "-3", "-4", "-5", "-6"];
const Y0 = 153;
const END = P * 22;
const gx = (k: number) => Math.floor(P * k) + 0.5;

const Bus = ({ top, values }: { top: number; values: string[] }) => {
  const t = top - Y0 + 0.5;
  const b = t + 11.5;
  return (
    <g>
      {values.map((v, i) => {
        const x = gx(i);
        const x2 = gx(i + 1);
        return (
          <g key={i}>
            <path d={`M${x} ${t + 2}L${x + 2} ${t}H${x2 - 2}L${x2} ${t + 2}M${x} ${b - 2}L${x + 2} ${b}H${x2 - 2}L${x2} ${b - 2}`} fill="none" stroke="#b4f0b4" />
            <text x={x + 1.5} y={t + 10} fontSize="11" fill="#fff">
              {v}
            </text>
          </g>
        );
      })}
    </g>
  );
};

const Waves = () => {
  const y = (v: number) => v - Y0 + 0.5;
  const clock = bits
    .map((_, i) => `V${y(173)}H${gx(i) + 26}V${y(185)}H${gx(i + 1)}`)
    .join("");
  const gridLines = Array.from({ length: 25 }, (_, k) => gx(k));
  const g = "#00ee00";
  return (
    <WaveSvg width="1285" height="620">
      <rect width="1285" height="620" fill="#000" />
      {gridLines.slice(1).map((x) => (
        <path key={x} d={`M${x} 0V620`} stroke="#808080" />
      ))}
      <path d="M.5 0V620" stroke="#ff0" />
      <path d={`M0 ${y(156)}H${gx(12)}V${y(168)}H${END}`} fill="none" stroke={g} />
      <path d={`M.5 ${y(173)}${clock}V${y(173)}`} fill="none" stroke="#00ff00" />
      <path d={`M0 ${y(202)}H${END}`} stroke={g} />
      <Bus top={207} values={bits} />
      <path d={`M0 ${y(236)}H${gx(8)}V${y(224)}H${gx(9)}V${y(236)}H${END}`} fill="none" stroke={g} />
      <path d={`M0 ${y(253)}H${gx(15)}V${y(241)}H${gx(16)}V${y(253)}H${END}`} fill="none" stroke={g} />
      <Bus top={258} values={bits} />
      <Bus top={275} values={ints} />
      <path d={`M1.5 ${y(157)}V${y(168)}M1.5 ${y(190)}V${y(202)}M1.5 ${y(225)}V${y(236)}M1.5 ${y(242)}V${y(253)}`} stroke="#e01010" strokeDasharray="3 3" />
      <path d={`M1.5 ${y(208)}V${y(219)}M1.5 ${y(259)}V${y(270)}M1.5 ${y(276)}V${y(287)}`} stroke="#2020c0" strokeWidth="2" />
    </WaveSvg>
  );
};

const Ruler = () => {
  const ticks = Array.from({ length: 245 }, (_, i) => i);
  const labels = ["0 ns", "0.1 ns", "0.2 ns", "0.3 ns", "0.4 ns", "0.5 ns", "0.6 ns", "0.7 ns", "0.8 ns", "0.9 ns", "1 ns", "1.1 ns", "1.2 ns"];
  return (
    <WaveSvg width="1285" height="23">
      <path d="M.5 0V23" stroke="#ff0" />
      {ticks.map((i) => {
        const x = Math.floor(5.25 * i) + 0.5;
        return <path key={i} d={`M${x} ${i % 10 === 0 ? 1 : 4}V9`} stroke="#00c800" />;
      })}
      {labels.map((l, i) => (
        <text key={l} x={P * 2 * i} y="21" fontSize="11.5" fill="#00e000" textAnchor="middle">
          {l}
        </text>
      ))}
    </WaveSvg>
  );
};

export default function App() {
  return (
    <Page>
      <GlobalStyle />
      <TitleBar>
        <Blur $l={232} $w={195} $c="#c6c9cc" />
        <Blur $l={236} $w={12} $c="#55585c" />
        <Blur $l={440} $w={24} $c="#8aa4d8" />
        <Blur $l={465} $w={150} $c="#b4b9be" />
        <LogoBox>
          <Logo />
        </LogoBox>
        <AppName>Wave</AppName>
        <WinControls>
          <WinBtn $w={28}>
            <svg width="12" height="6" viewBox="0 0 12 6">
              <rect x=".5" y=".5" width="11" height="5" fill="#f2f2f2" stroke="#555" />
            </svg>
          </WinBtn>
          <WinBtn $w={26}>
            <svg width="12" height="12" viewBox="0 0 12 12">
              <rect x="3.5" y=".5" width="8" height="8" fill="#ddd" stroke="#555" />
              <rect x=".5" y="3.5" width="8" height="8" fill="#f2f2f2" stroke="#555" />
              <rect x="3" y="6" width="3" height="3" fill="#888" />
            </svg>
          </WinBtn>
          <WinBtn $w={46}>
            <svg width="12" height="11" viewBox="0 0 12 11">
              <path d="M1.5 1l9 9M10.5 1l-9 9" stroke="#555" strokeWidth="3" />
              <path d="M1.5 1l9 9M10.5 1l-9 9" stroke="#f6f6f6" strokeWidth="1.6" />
            </svg>
          </WinBtn>
        </WinControls>
      </TitleBar>
      <MenuBar>
        {["File", "Edit", "View", "Add", "Format", "Tools", "Bookmarks", "Window", "Help"].map((m) => (
          <MenuItem key={m}>{m}</MenuItem>
        ))}
      </MenuBar>
      <SubTitle>
        <LogoBox>
          <Logo />
        </LogoBox>
        <SubText>Wave - Default</SubText>
        <GripLines>
          <GripDots />
        </GripLines>
        <SubBtn $first>
          <svg width="10" height="10" viewBox="0 0 10 10">
            <path d="M5 0v10M0 5h10M2 3l2 2-2 2M8 3L6 5l2 2" stroke="#333" strokeWidth=".8" fill="none" strokeDasharray="1 1" />
          </svg>
        </SubBtn>
        <SubBtn>
          <svg width="10" height="10" viewBox="0 0 10 10">
            <path d="M1 4h6v5H1zM4 5l4-4M5 1h3v3" fill="none" stroke="#000" strokeWidth="1.4" />
          </svg>
        </SubBtn>
        <SubBtn>
          <svg width="10" height="10" viewBox="0 0 10 10">
            <path d="M1 1l8 8M9 1L1 9" stroke="#000" strokeWidth="1.6" />
          </svg>
        </SubBtn>
      </SubTitle>
      <ToolRow $h={32}>
        {row1.map((def) => (
          <ToolGroup key={def.w} def={def} />
        ))}
      </ToolRow>
      <ToolRow $h={32}>
        {row2.map((def, i) => (
          <ToolGroup key={i} def={def} />
        ))}
      </ToolRow>
      <Panes>
        <Col $w={222}>
          <Head>
            <HeadIcon>
              <HeadGlyph />
            </HeadIcon>
            <HeadDrop>
              <Ic name="dd" size={18} />
            </HeadDrop>
          </Head>
          <HeadGap />
          <RowList $strip>
            {signals.map((s, i) => (
              <SignalRow key={s.name} $on={i === 0}>
                {s.expand ? (
                  <>
                    <Expander>+</Expander>
                    <RowSpacer $w={3} />
                  </>
                ) : (
                  <RowSpacer $w={17} />
                )}
                <RowIcon>
                  <Diamond arrow={s.arrow} />
                </RowIcon>
                {s.name}
              </SignalRow>
            ))}
            <InsertMark $l={4} $r={5} $tip />
          </RowList>
          <RuleLine />
          <NowRow>
            <IconTray>
              <TinyTools kind="now" />
            </IconTray>
            <RightPad $r={9}>Now</RightPad>
          </NowRow>
          <CursorRow>
            <CursorTray>
              <TinyTools kind="cursor" />
            </CursorTray>
            <RightPad $r={9}>Cursor 1</RightPad>
          </CursorRow>
          <ScrollBar $l={9} $r={1}>
            <ScrollBtn $dir="l" />
            <ScrollBtn $dir="r" />
          </ScrollBar>
        </Col>
        <Col $w={58}>
          <Head>
            <MsgsLabel>Msgs</MsgsLabel>
          </Head>
          <HeadGap />
          <RowList>
            {signals.map((s, i) => (
              <SignalRow key={s.name} $on={i === 0}>
                <ValueText>{s.msg}</ValueText>
              </SignalRow>
            ))}
            <InsertMark $l={2} $r={5} />
          </RowList>
          <RuleLine />
          <NowRow>
            <RightPad $r={10}>1.1 ns</RightPad>
          </NowRow>
          <CursorRow>
            <RightPad $r={10}>0.00 ns</RightPad>
          </CursorRow>
          <ScrollBar $l={2} $r={1}>
            <ScrollBtn $dir="l" />
            <ScrollBtn $dir="r" />
          </ScrollBar>
        </Col>
        <Col $w={1285} $gap={2}>
          <Head $dark />
          <HeadGap $mark />
          <RowList>
            <Waves />
          </RowList>
          <RuleLine $mark />
          <NowRow $dark>
            <Ruler />
          </NowRow>
          <CursorRow $dark>
            <CursorFlag>0.00 ns</CursorFlag>
          </CursorRow>
          <ScrollBar>
            <ScrollBtn $dir="l" $on />
            <ScrollFill />
            <ScrollBtn $dir="r" $on />
          </ScrollBar>
        </Col>
        <SideCol>
          <SideBlock $h={20} />
          <VScroll>
            <VBtn />
            <VThumb />
            <VFill />
            <VBtn $down />
          </VScroll>
          <SideBlock $h={41} $mt={1} />
          <SideBlock $h={18} $mt={3} />
        </SideCol>
      </Panes>
      <StatusBar>
        <StatusCell $w={172}>0 ps to 1224 ps</StatusCell>
        <StatusCell>/up_down_counter/up_down</StatusCell>
        <ResizeCorner>
          <svg width="14" height="14" viewBox="0 0 14 14">
            <path d="M3 13L13 3M7 13l6-6M11 13l2-2" stroke="#8a8a8a" />
          </svg>
        </ResizeCorner>
      </StatusBar>
    </Page>
  );
}
